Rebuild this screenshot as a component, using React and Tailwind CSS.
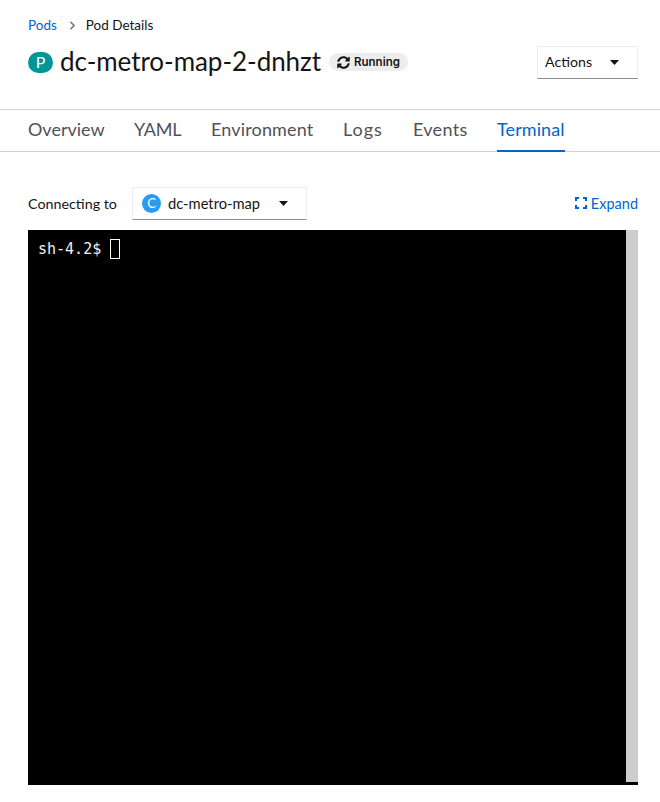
import { ChevronRight } from "lucide-react";

function Caret() {
  return (
    <svg width="9" height="5" viewBox="0 0 9 5" className="shrink-0">
      <path d="M0 0h9L4.500 5z" fill="#151515" />
    </svg>
  );
}

function SyncIcon() {
  return (
    <svg width="13" height="13" viewBox="0 0 512 512" className="shrink-0">
      <path
        fill="#151515"
        d="M370.7 133.3C339.5 104 298.9 88 255.800 88c-77.500.100-144.300 53.200-162.800 126.900-1.300 5.400-6.100 9.100-11.600 9.100H24.100c-7.500 0-13.200-6.800-11.800-14.200C33.900 94.900 134.800 8 256 8c66.400 0 126.800 26.100 171.300 68.700L463 41C478.100 25.900 504 36.600 504 57.900V192c0 13.300-10.700 24-24 24H345.900c-21.400 0-32.100-25.900-17-41l41.800-41.700zM32 296h134.100c21.400 0 32.100 25.900 17 41l-41.800 41.800c31.300 29.300 71.800 45.300 114.900 45.200 77.400-.100 144.300-53.100 162.800-126.800 1.300-5.400 6.100-9.100 11.600-9.100h57.300c7.500 0 13.200 6.800 11.800 14.200C478.100 417.100 377.200 504 256 504c-66.400 0-126.800-26.100-171.300-68.700L49 471C33.900 486.100 8 475.400 8 454.100V320c0-13.300 10.700-24 24-24z"
      />
    </svg>
  );
}

function ExpandIcon() {
  return (
    <svg width="12" height="12" viewBox="0 0 12 12" fill="none" stroke="#06c" strokeWidth="2" className="mb-[2px] shrink-0">
      <path d="M1 4V1h3M8 1h3v3M11 8v3H8M4 11H1V8" />
    </svg>
  );
}

const tabs = [
  { label: "Overview", cls: "w-[76px]" },
  { label: "YAML", cls: "w-[47px] tracking-[-0.2px]" },
  { label: "Environment", cls: "w-[102px] tracking-[0.15px]" },
  { label: "Logs", cls: "w-[40px] tracking-[1px]" },
  { label: "Events", cls: "w-[54px] tracking-[0.3px]" },
  { label: "Terminal", cls: "w-[68px] tracking-[0.1px]" },
];

export default function App() {
  return (
    <div className="h-[802px] w-[660px] overflow-hidden bg-white text-[#151515] font-['Lato','Liberation_Sans',sans-serif]">
      <div className="h-[109px] pl-[28px] pr-[22px] pt-[16px]">
        <nav className="flex items-center text-[13.5px] leading-[18px]">
          <span className="text-[#06c]">Pods</span>
          <ChevronRight size={13} strokeWidth={3} className="ml-[9px] mr-[7px] text-[#737679]" />
          <span>Pod Details</span>
        </nav>
        <div className="mt-[10px] flex items-start justify-between">
          <div className="flex items-center">
            <span className="flex h-[21px] w-[25px] items-center justify-center rounded-full bg-[#009596] text-[16px] text-white">P</span>
            <h1 className="ml-[7px] whitespace-nowrap pb-[2px] text-[26px] leading-[34px] tracking-[-0.05px]">dc-metro-map-2-dnhzt</h1>
            <span className="ml-[8px] flex h-[18px] w-[79px] items-center gap-[4px] rounded-full bg-[#ededed] pl-[8px] font-['Inter',sans-serif] text-[11.5px] font-semibold">
              <SyncIcon />
              <span className="pt-[2px]">Running</span>
            </span>
          </div>
          <button className="mt-[2px] flex h-[33px] w-[101px] items-center justify-between border border-[#ededed] border-b-[#8a8d90] pb-[1px] pl-[7px] pr-[18px] text-[14.2px]">
            Actions
            <Caret />
          </button>
        </div>
      </div>

      <div className="flex h-[43px] gap-[30px] border-y border-[#d2d2d2] px-[28px]">
        {tabs.map((tab) => (
          <div
            key={tab.label}
            className={
              tab.label === "Terminal"
                ? `flex h-[42px] items-center whitespace-nowrap border-b-2 border-[#06c] pb-[2px] text-[18px] text-[#06c] ${tab.cls}`
                : `flex h-[42px] items-center whitespace-nowrap pb-[4px] text-[18px] text-[#4f5255] ${tab.cls}`
            }
          >
            {tab.label}
          </div>
        ))}
      </div>

      <div className="pl-[28px] pr-[22px] pt-[35px]">
        <div className="flex h-[33px] items-center justify-between text-[14.5px]">
          <div className="flex items-center">
            <span className="w-[89px] whitespace-nowrap text-[14.3px]">Connecting to</span>
            <button className="ml-[15px] flex h-[33px] w-[175px] items-center border border-[#ededed] border-b-[#8a8d90] pl-[9px] pr-[18px]">
              <span className="flex h-[19px] w-[19px] items-center justify-center rounded-full bg-[#2b9af3] text-[13px] text-white">C</span>
              <span className="ml-[7px] flex-1 text-left text-[14.7px]">dc-metro-map</span>
              <Caret />
            </button>
          </div>
          <div className="flex items-center gap-[4px] text-[#06c]">
            <ExpandIcon />
            Expand
          </div>
        </div>

        <div className="mt-[10px] flex h-[555px] w-[610px] items-start justify-between bg-black">
          <div className="flex items-center pl-[10px] pt-[9px] font-['DejaVu_Sans_Mono',monospace] text-[15px] leading-[20px] text-[#f0f0f0]">
            sh-4.2$
            <span className="ml-[9px] h-[20px] w-[10px] border border-white" />
          </div>
          <div className="h-[552px] w-[12px] bg-[#cdcdcd]" />
        </div>
      </div>
    </div>
  );
}
